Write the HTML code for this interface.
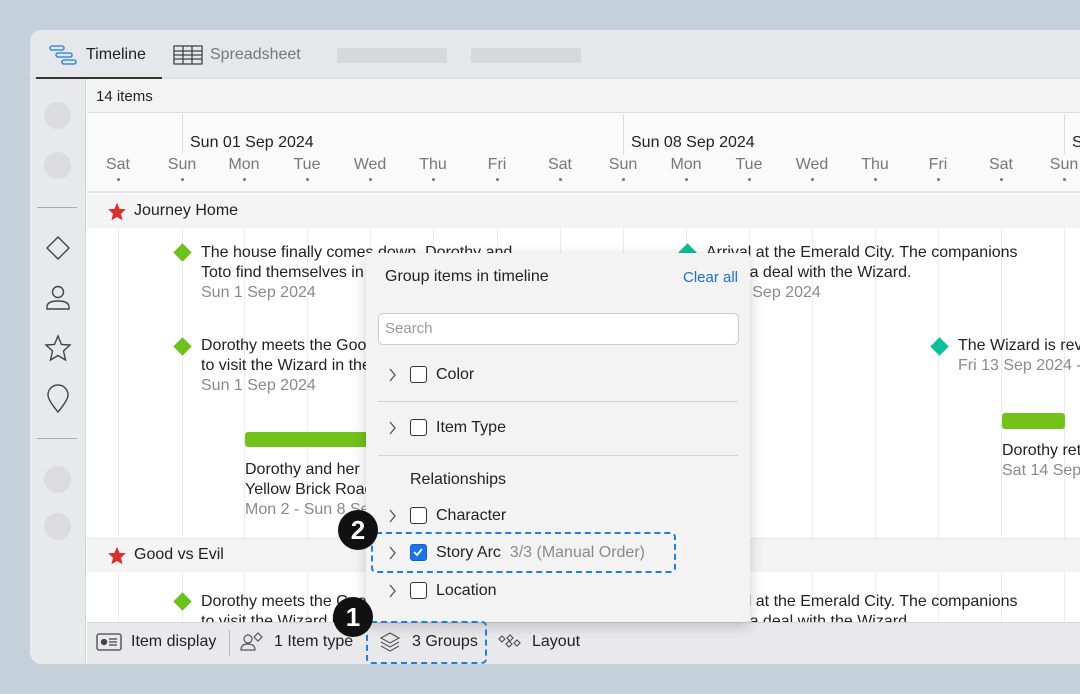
<!DOCTYPE html>
<html><head><meta charset="utf-8"><style>
*{box-sizing:border-box;margin:0;padding:0}
body{width:1080px;height:694px;background:#c4d0da;font-family:"Liberation Sans","DejaVu Sans",sans-serif;position:relative;overflow:hidden;color:#222}
.win{position:absolute;left:30px;top:30px;width:1080px;height:634px;background:#fff;border-radius:12px;overflow:hidden}
.abs{position:absolute}
.tabs{left:0;top:0;width:1050px;height:49px;background:#e6e7ea;border-bottom:1px solid #d8d8da}
.side{left:0;top:49px;width:56px;height:585px;background:#e8e9eb;border-right:1px solid #d6d6d8}
.circ{position:absolute;left:14px;width:27px;height:27px;border-radius:50%;background:#dcdcde}
.t{position:absolute;white-space:nowrap;font-size:16px}
.g{color:#8a8a8a}
.vl{position:absolute;top:83px;width:1px;height:510px;background:#ececee}
.dot{position:absolute;top:148px;width:3px;height:3px;border-radius:50%;background:#777}
.dia{position:absolute;width:13px;height:13px;transform:rotate(45deg)}
.cb{position:absolute;width:17px;height:17px;border:1.5px solid #333;border-radius:3px;background:#fff}
.chev{position:absolute;width:10px;height:16px}
.badge{position:absolute;width:40px;height:40px;border-radius:50%;background:#111;color:#fff;font-weight:bold;font-size:26px;text-align:center;line-height:40px}
</style></head><body>
<div class="win">
<div class="abs tabs"></div>
<svg class="abs" style="left:18px;top:14px" width="30" height="22" viewBox="0 0 30 22" fill="none" stroke="#3b8be8" stroke-width="1.6"><rect x="2" y="2" width="14" height="4" rx="2"/><rect x="8" y="9" width="16" height="4" rx="2"/><rect x="14" y="16" width="14" height="4" rx="2"/></svg>
<div class="t" style="left:56px;top:16px;color:#222">Timeline</div>
<div class="abs" style="left:6px;top:47px;width:126px;height:2px;background:#333"></div>
<svg class="abs" style="left:143px;top:15px" width="30" height="20" viewBox="0 0 30 20" fill="none" stroke="#444" stroke-width="1.3"><rect x="1" y="1" width="28" height="18"/><path d="M1 6H29M1 10H29M1 14H29M10 1V19M19 1V19"/></svg>
<div class="t g" style="left:180px;top:16px;color:#777">Spreadsheet</div>
<div class="abs" style="left:307px;top:18px;width:110px;height:15px;background:#d7d8da"></div>
<div class="abs" style="left:441px;top:18px;width:110px;height:15px;background:#d7d8da"></div>
<div class="abs side"></div>
<div class="circ" style="top:72px"></div><div class="circ" style="top:122px"></div>
<div class="abs" style="left:7px;top:177px;width:40px;height:1px;background:#aaa"></div>
<svg class="abs" style="left:14px;top:204px" width="28" height="28" viewBox="0 0 28 28" fill="none" stroke="#444" stroke-width="1.4"><path d="M14 3L25 14L14 25L3 14Z"/></svg>
<svg class="abs" style="left:14px;top:253px" width="28" height="30" viewBox="0 0 28 30" fill="none" stroke="#444" stroke-width="1.4"><circle cx="14" cy="9" r="5.5"/><path d="M3 26V24Q3 18 14 18Q25 18 25 24V26Z"/></svg>
<svg class="abs" style="left:13px;top:304px" width="30" height="28" viewBox="0 0 30 28" fill="none" stroke="#444" stroke-width="1.4"><path d="M15 2L18.5 10.5L27 11L20.5 17L22.5 26L15 21.5L7.5 26L9.5 17L3 11L11.5 10.5Z"/></svg>
<svg class="abs" style="left:16px;top:354px" width="24" height="30" viewBox="0 0 24 30" fill="none" stroke="#444" stroke-width="1.4"><path d="M12 28Q2 16 2 11A10 10 0 0 1 22 11Q22 16 12 28Z"/></svg>
<div class="abs" style="left:7px;top:408px;width:40px;height:1px;background:#aaa"></div>
<div class="circ" style="top:436px"></div><div class="circ" style="top:483px"></div>

<div class="abs" style="left:57px;top:49px;width:1023px;height:34px;background:#f3f3f4;border-bottom:1px solid #dcdcde"></div>
<div class="t" style="left:66px;top:58px;font-size:15px">14 items</div>
<div class="abs" style="left:57px;top:84px;width:1023px;height:79px;background:#fafafa;border-bottom:2px solid #e6e6e8"></div>
<div class="abs" style="left:152px;top:84px;width:1px;height:40px;background:#ddd"></div>
<div class="abs" style="left:593px;top:84px;width:1px;height:40px;background:#ddd"></div>
<div class="abs" style="left:1034px;top:84px;width:1px;height:40px;background:#ddd"></div>
<div class="t" style="left:160px;top:104px">Sun 01 Sep 2024</div>
<div class="t" style="left:601px;top:104px">Sun 08 Sep 2024</div>
<div class="t" style="left:1042px;top:104px">S</div>
<div id="days"></div>
<div class="abs" style="left:57px;top:164px;width:1023px;height:34px;background:#f4f4f5"></div>
<div class="abs" style="left:57px;top:508px;width:1023px;height:34px;background:#f4f4f5;border-top:1px solid #e6e6e8"></div>
<svg class="abs" style="left:76px;top:171px" width="22" height="21" viewBox="0 0 30 28"><path fill="#d9302c" d="M15 2L18.5 10.5L27 11L20.5 17L22.5 26L15 21.5L7.5 26L9.5 17L3 11L11.5 10.5Z"/></svg>
<div class="t" style="left:104px;top:172px">Journey Home</div>
<svg class="abs" style="left:76px;top:515px" width="22" height="21" viewBox="0 0 30 28"><path fill="#d9302c" d="M15 2L18.5 10.5L27 11L20.5 17L22.5 26L15 21.5L7.5 26L9.5 17L3 11L11.5 10.5Z"/></svg>
<div class="t" style="left:104px;top:516px">Good vs Evil</div>

<div class="dia" style="left:146px;top:216px;background:#6cc11c"></div>
<div class="t" style="left:171px;top:213px;line-height:20px">The house finally comes down. Dorothy and<br>Toto find themselves in<br><span class="g">Sun 1 Sep 2024</span></div>
<div class="dia" style="left:146px;top:310px;background:#6cc11c"></div>
<div class="t" style="left:171px;top:306px;line-height:20px">Dorothy meets the Good Witch<br>to visit the Wizard in the<br><span class="g">Sun 1 Sep 2024</span></div>
<div class="abs" style="left:215px;top:402px;width:130px;height:15px;border-radius:3px;background:#72c21a"></div>
<div class="t" style="left:215px;top:430px;line-height:20px">Dorothy and her<br>Yellow Brick Road<br><span class="g">Mon 2 - Sun 8 Sep</span></div>
<div class="dia" style="left:651px;top:216px;background:#0dbf9c"></div>
<div class="t" style="left:676px;top:213px;line-height:20px">Arrival at the Emerald City. The companions<br>make a deal with the Wizard.<br><span class="g">Sun 8 Sep 2024</span></div>
<div class="dia" style="left:903px;top:310px;background:#0dbf9c"></div>
<div class="t" style="left:928px;top:306px;line-height:20px">The Wizard is revealed<br><span class="g">Fri 13 Sep 2024 - </span></div>
<div class="abs" style="left:972px;top:383px;width:63px;height:16px;border-radius:3px;background:#72c21a"></div>
<div class="t" style="left:972px;top:411px;line-height:20px">Dorothy returns<br><span class="g">Sat 14 Sep</span></div>
<div class="dia" style="left:146px;top:565px;background:#6cc11c"></div>
<div class="t" style="left:171px;top:562px;line-height:20px">Dorothy meets the Good Witch<br>to visit the Wizard in the</div>
<div class="t" style="left:676px;top:562px;line-height:20px">Arrival at the Emerald City. The companions<br>make a deal with the Wizard.</div>

<div class="abs" style="left:57px;top:592px;width:1023px;height:42px;background:#e9e9eb;border-top:1px solid #d6d6d8"></div>
<svg class="abs" style="left:66px;top:602px" width="26" height="20" viewBox="0 0 26 20" fill="none" stroke="#444" stroke-width="1.3"><rect x="1" y="2" width="24" height="16" rx="2"/><circle cx="8" cy="10" r="2.5" fill="#444"/><path d="M13 7H21M13 10H21M13 13H21"/></svg>
<div class="t" style="left:101px;top:603px">Item display</div>
<div class="abs" style="left:199px;top:600px;width:1px;height:26px;background:#bbb"></div>
<svg class="abs" style="left:209px;top:601px" width="26" height="22" viewBox="0 0 26 22" fill="none" stroke="#555" stroke-width="1.2"><circle cx="9" cy="8" r="4"/><path d="M2 19Q2 13 9 13Q16 13 16 19Z"/><path d="M19 2L23 6L19 10L15 6Z"/></svg>
<div class="t" style="left:244px;top:603px">1 Item type</div>
<svg class="abs" style="left:349px;top:601px" width="22" height="22" viewBox="0 0 22 22" fill="none" stroke="#555" stroke-width="1.2"><path d="M11 2L20 7L11 12L2 7Z"/><path d="M2 11L11 16L20 11"/><path d="M2 15L11 20L20 15"/></svg>
<div class="t" style="left:382px;top:603px">3 Groups</div>
<svg class="abs" style="left:467px;top:603px" width="26" height="16" viewBox="0 0 26 16" fill="none" stroke="#555" stroke-width="1.2"><path d="M5 3L8 6L5 9L2 6Z"/><path d="M13 2L16 5L13 8L10 5Z"/><path d="M12 8L15 11L12 14L9 11Z"/><path d="M20 7L23 10L20 13L17 10Z"/></svg>
<div class="t" style="left:502px;top:603px">Layout</div>
</div>

<div class="abs" style="left:366px;top:253px;width:384px;height:369px;background:#f3f3f3;border-radius:4px;box-shadow:0 4px 14px rgba(0,0,0,.2)">
<div class="t" style="left:19px;top:15px">Group items in timeline</div>
<div class="t" style="left:317px;top:16px;color:#1a6fd6;font-size:15px">Clear all</div>
<div class="abs" style="left:12px;top:60px;width:361px;height:32px;background:#fff;border:1px solid #ccc;border-radius:5px"></div>
<div class="t g" style="left:19px;top:67px;color:#999;font-size:15px">Search</div>
<svg class="chev" style="left:21px;top:114px" viewBox="0 0 10 16"><path d="M3 2L8 8L3 14" stroke="#555" stroke-width="1.3" fill="none"/></svg><div class="cb" style="left:44px;top:113px"></div><div class="t" style="left:70px;top:113px">Color</div>
<div class="abs" style="left:12px;top:148px;width:360px;height:1px;background:#d4d4d4"></div>
<svg class="chev" style="left:21px;top:167px" viewBox="0 0 10 16"><path d="M3 2L8 8L3 14" stroke="#555" stroke-width="1.3" fill="none"/></svg><div class="cb" style="left:44px;top:166px"></div><div class="t" style="left:70px;top:166px">Item Type</div>
<div class="abs" style="left:12px;top:202px;width:360px;height:1px;background:#d4d4d4"></div>
<div class="t" style="left:44px;top:218px">Relationships</div>
<svg class="chev" style="left:21px;top:255px" viewBox="0 0 10 16"><path d="M3 2L8 8L3 14" stroke="#555" stroke-width="1.3" fill="none"/></svg><div class="cb" style="left:44px;top:254px"></div><div class="t" style="left:70px;top:254px">Character</div>
<svg class="chev" style="left:21px;top:292px" viewBox="0 0 10 16"><path d="M3 2L8 8L3 14" stroke="#555" stroke-width="1.3" fill="none"/></svg>
<div class="cb" style="left:44px;top:291px;background:#1a73e8;border-color:#1a5fc0"><svg width="14" height="14" viewBox="0 0 14 14" style="position:absolute;left:0;top:0"><path d="M3 7L6 10L11 4" stroke="#fff" stroke-width="1.8" fill="none"/></svg></div>
<div class="t" style="left:70px;top:291px">Story Arc <span class="g">&nbsp;3/3 (Manual Order)</span></div>
<svg class="chev" style="left:21px;top:330px" viewBox="0 0 10 16"><path d="M3 2L8 8L3 14" stroke="#555" stroke-width="1.3" fill="none"/></svg><div class="cb" style="left:44px;top:329px"></div><div class="t" style="left:70px;top:329px">Location</div>
</div>
<div class="abs" style="left:371px;top:532px;width:305px;height:41px;border:2.5px dashed #1f7fe0;border-radius:5px"></div>
<div class="abs" style="left:366px;top:621px;width:121px;height:43px;border:2.5px dashed #1f7fe0;border-radius:5px"></div>
<div class="badge" style="left:338px;top:510px">2</div>
<div class="badge" style="left:333px;top:597px">1</div>
<script>
var d=["Sat","Sun","Mon","Tue","Wed","Thu","Fri","Sat","Sun","Mon","Tue","Wed","Thu","Fri","Sat","Sun"];
var xs=[118,182,244,307,370,433,497,560,623,686,749,812,875,938,1001,1064];
var h="";
for(var i=0;i<d.length;i++){var x=xs[i]-30;
h+='<div class="t" style="left:'+(x-40)+'px;width:80px;text-align:center;top:126px;color:#777">'+d[i]+'</div>';
h+='<div class="dot" style="left:'+(x-1)+'px"></div>';
h+='<div class="vl" style="left:'+x+'px;top:164px;height:428px"></div>';}
document.getElementById("days").outerHTML=h;
</script>
</body></html>
